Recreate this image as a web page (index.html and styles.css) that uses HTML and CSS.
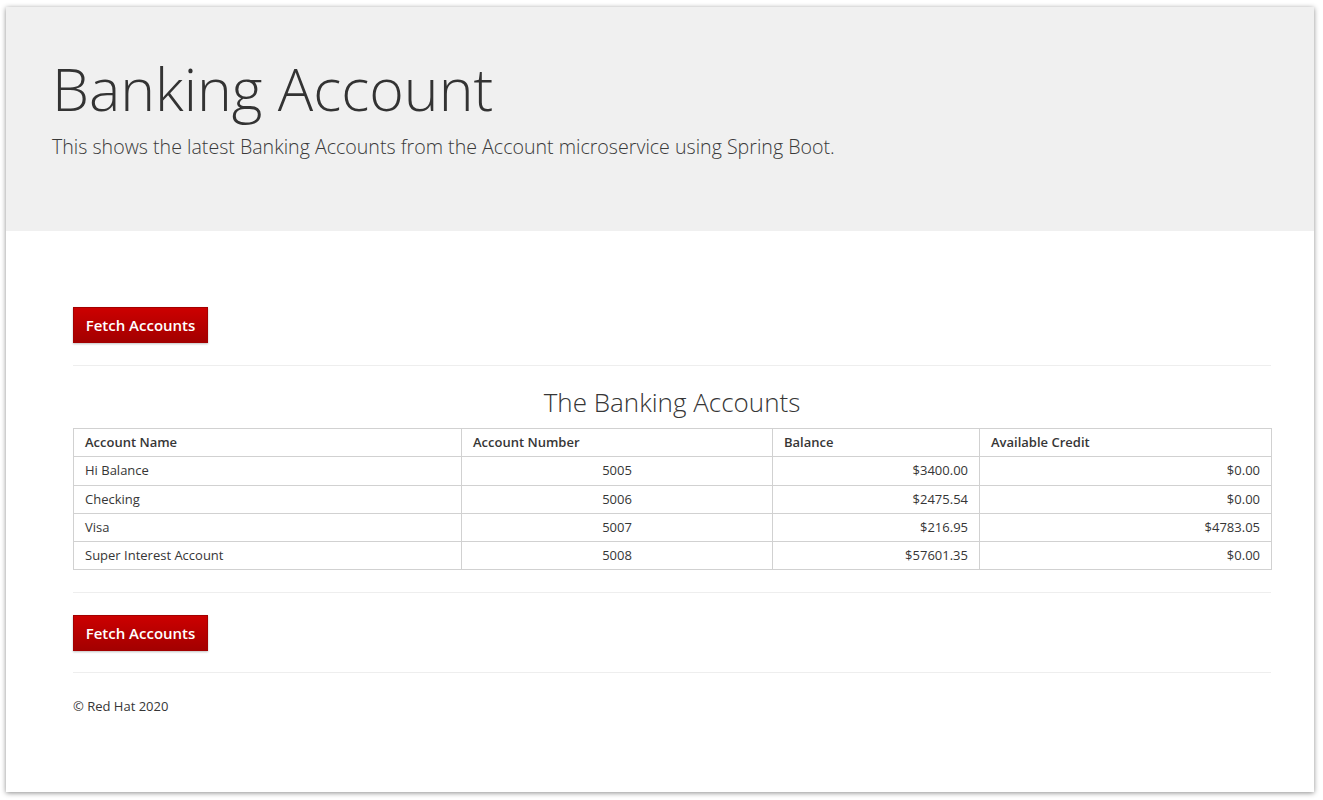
FILE: index.html
```html
<!DOCTYPE html>
<html>
<head>
<meta charset="utf-8">
<title>Banking Account</title>
<link rel="stylesheet" href="styles.css">
</head>
<body>
<div class="window">
  <header class="jumbotron">
    <h1>Banking Account</h1>
    <p>This shows the latest Banking Accounts from the Account microservice using Spring Boot.</p>
  </header>
  <main class="container">
    <div class="actions first"><button class="btn">Fetch Accounts</button></div>
    <hr>
    <h2>The Banking Accounts</h2>
    <table class="accounts">
      <colgroup>
        <col class="col-name"><col class="col-number"><col class="col-balance"><col class="col-credit">
      </colgroup>
      <thead>
        <tr><th>Account Name</th><th>Account Number</th><th>Balance</th><th>Available Credit</th></tr>
      </thead>
      <tbody>
        <tr><td>Hi Balance</td><td class="c">5005</td><td class="r">$3400.00</td><td class="r">$0.00</td></tr>
        <tr><td>Checking</td><td class="c">5006</td><td class="r">$2475.54</td><td class="r">$0.00</td></tr>
        <tr><td>Visa</td><td class="c">5007</td><td class="r">$216.95</td><td class="r">$4783.05</td></tr>
        <tr><td>Super Interest Account</td><td class="c">5008</td><td class="r">$57601.35</td><td class="r">$0.00</td></tr>
      </tbody>
    </table>
    <hr class="after-table">
    <div class="actions"><button class="btn">Fetch Accounts</button></div>
    <hr class="before-footer">
    <footer class="footer">© Red Hat 2020</footer>
  </main>
</div>
</body>
</html>
```

FILE: styles.css
```css
html, body {
  margin: 0;
  padding: 0;
  background: #ffffff;
}
body {
  font-family: "Open Sans", "Liberation Sans", sans-serif;
  font-size: 13px;
  color: #363636;
  padding: 7px 9px 8px 6px;
}
.window {
  height: 785px;
  background: #ffffff;
  box-shadow: 0 1px 5px rgba(0, 0, 0, 0.45);
  overflow: hidden;
}
.jumbotron {
  background: #f0f0f0;
  height: 224px;
  box-sizing: border-box;
  padding: 47px 46px 0;
}
.jumbotron h1 {
  margin: 0;
  font-size: 59px;
  font-weight: 300;
  line-height: 69px;
  color: #333333;
}
.jumbotron p {
  margin: 9px 0 0;
  font-size: 19.6px;
  font-weight: 300;
  line-height: 30px;
  color: #3a3a3a;
}
.container {
  padding: 0 43px 0 67px;
}
.actions {
  margin-top: 22px;
}
.actions.first {
  margin-top: 76px;
}
.btn {
  display: block;
  width: 135px;
  height: 36px;
  padding: 0;
  border: 1px solid #a30000;
  background: linear-gradient(#cc0000, #a30000);
  color: #ffffff;
  font-family: "Open Sans", "Liberation Sans", sans-serif;
  font-size: 15px;
  font-weight: 600;
  box-shadow: 0 1px 2px rgba(0, 0, 0, 0.25);
  cursor: pointer;
}
hr {
  border: 0;
  border-top: 1px solid #eeeeee;
  margin: 22px 0 0;
}
hr.before-footer {
  margin-top: 21px;
}
h2 {
  margin: 19px 0 9px;
  text-align: center;
  font-size: 26px;
  font-weight: 300;
  line-height: 34px;
  color: #363636;
}
.accounts {
  width: 1198px;
  border-collapse: collapse;
  table-layout: fixed;
  border: 1px solid #d1d1d1;
}
.col-name { width: 388px; }
.col-number { width: 311px; }
.col-balance { width: 207px; }
.col-credit { width: 292px; }
.accounts th,
.accounts td {
  border: 1px solid #d1d1d1;
  padding: 4px 11px 5px;
  line-height: 18.3px;
  text-align: left;
  font-size: 13px;
}
.accounts th {
  font-weight: 600;
}
.accounts td.c {
  text-align: center;
}
.accounts td.r {
  text-align: right;
}
.footer {
  margin-top: 24px;
  font-size: 13px;
  line-height: 18px;
}
```
